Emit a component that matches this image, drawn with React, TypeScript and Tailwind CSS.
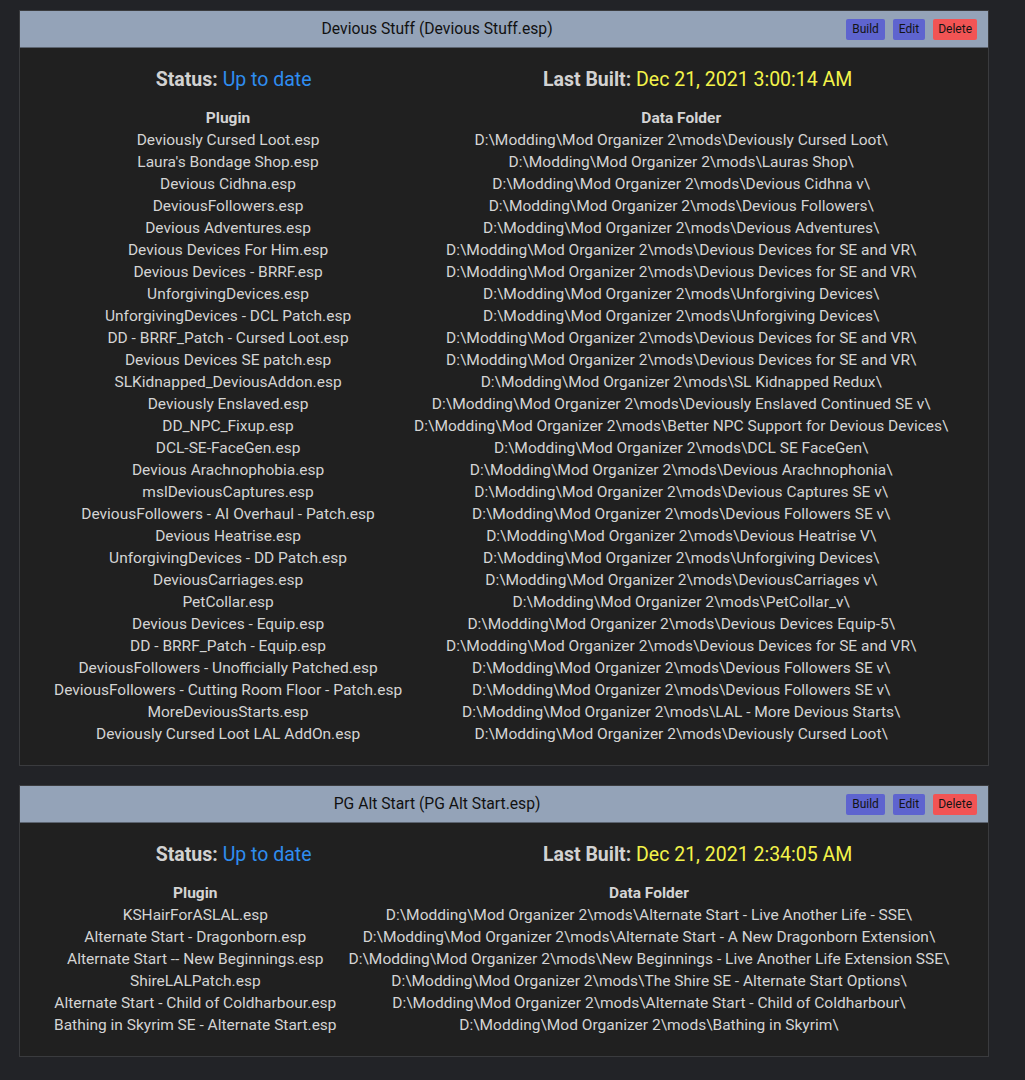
import React from 'react';

type Row = [string, string];

const MO = 'D:\\Modding\\Mod Organizer 2\\mods\\';

const devious: Row[] = [
  ['Deviously Cursed Loot.esp', 'Deviously Cursed Loot\\'],
  ["Laura's Bondage Shop.esp", 'Lauras Shop\\'],
  ['Devious Cidhna.esp', 'Devious Cidhna v\\'],
  ['DeviousFollowers.esp', 'Devious Followers\\'],
  ['Devious Adventures.esp', 'Devious Adventures\\'],
  ['Devious Devices For Him.esp', 'Devious Devices for SE and VR\\'],
  ['Devious Devices - BRRF.esp', 'Devious Devices for SE and VR\\'],
  ['UnforgivingDevices.esp', 'Unforgiving Devices\\'],
  ['UnforgivingDevices - DCL Patch.esp', 'Unforgiving Devices\\'],
  ['DD - BRRF_Patch - Cursed Loot.esp', 'Devious Devices for SE and VR\\'],
  ['Devious Devices SE patch.esp', 'Devious Devices for SE and VR\\'],
  ['SLKidnapped_DeviousAddon.esp', 'SL Kidnapped Redux\\'],
  ['Deviously Enslaved.esp', 'Deviously Enslaved Continued SE v\\'],
  ['DD_NPC_Fixup.esp', 'Better NPC Support for Devious Devices\\'],
  ['DCL-SE-FaceGen.esp', 'DCL SE FaceGen\\'],
  ['Devious Arachnophobia.esp', 'Devious Arachnophonia\\'],
  ['mslDeviousCaptures.esp', 'Devious Captures SE v\\'],
  ['DeviousFollowers - AI Overhaul - Patch.esp', 'Devious Followers SE v\\'],
  ['Devious Heatrise.esp', 'Devious Heatrise V\\'],
  ['UnforgivingDevices - DD Patch.esp', 'Unforgiving Devices\\'],
  ['DeviousCarriages.esp', 'DeviousCarriages v\\'],
  ['PetCollar.esp', 'PetCollar_v\\'],
  ['Devious Devices - Equip.esp', 'Devious Devices Equip-5\\'],
  ['DD - BRRF_Patch - Equip.esp', 'Devious Devices for SE and VR\\'],
  ['DeviousFollowers - Unofficially Patched.esp', 'Devious Followers SE v\\'],
  ['DeviousFollowers - Cutting Room Floor - Patch.esp', 'Devious Followers SE v\\'],
  ['MoreDeviousStarts.esp', 'LAL - More Devious Starts\\'],
  ['Deviously Cursed Loot LAL AddOn.esp', 'Deviously Cursed Loot\\'],
];

const altStart: Row[] = [
  ['KSHairForASLAL.esp', 'Alternate Start - Live Another Life - SSE\\'],
  ['Alternate Start - Dragonborn.esp', 'Alternate Start - A New Dragonborn Extension\\'],
  ['Alternate Start -- New Beginnings.esp', 'New Beginnings - Live Another Life Extension SSE\\'],
  ['ShireLALPatch.esp', 'The Shire SE - Alternate Start Options\\'],
  ['Alternate Start - Child of Coldharbour.esp', 'Alternate Start - Child of Coldharbour\\'],
  ['Bathing in Skyrim SE - Alternate Start.esp', 'Bathing in Skyrim\\'],
];

const PackageCard: React.FC<{ title: string; built: string; rows: Row[] }> = ({ title, built, rows }) => {
  return (
    <div className="border border-[#3a3b3e] bg-[#202020]">
      {/* Header bar */}
      <div className="flex items-center h-[37px] bg-[#94a3b8] px-2 border-b border-[#5c6470]">
        <div className="flex-1 text-center text-[15.7px] text-[#111]">{title}</div>
        <div className="flex gap-2 pr-[3px]">
          <button className="h-[21px] px-[6px] rounded-[2px] bg-[#5e64cf] text-[12px] text-[#141414]">Build</button>
          <button className="h-[21px] px-[6px] rounded-[2px] bg-[#5e64cf] text-[12px] text-[#141414]">Edit</button>
          <button className="h-[21px] px-[5px] rounded-[2px] bg-[#f25454] text-[12px] text-[#141414]">Delete</button>
        </div>
      </div>

      <div className="px-5 pt-[19px] pb-[20px]">
        <div className="flex justify-around text-[19.5px] leading-[26px]">
          <div>
            <span className="font-bold text-[#d2d2d2]">Status: </span>
            <span className="text-[#2f8df0]">Up to date</span>
          </div>
          <div>
            <span className="font-bold text-[#d2d2d2]">Last Built: </span>
            <span className="text-[#f3f34a]">{built}</span>
          </div>
        </div>

        <table className="ml-2 mt-[14px] w-[904px] text-[15.5px] leading-[22px] text-[#d4d4d4]">
          <thead>
            <tr>
              <th className="px-[6px] font-bold">Plugin</th>
              <th className="px-[6px] font-bold">Data Folder</th>
            </tr>
          </thead>
          <tbody>
            {rows.map(([plugin, folder], i) => (
              <tr key={i}>
                <td className="px-[6px] text-center whitespace-nowrap">{plugin}</td>
                <td className="px-[6px] text-center whitespace-nowrap">{MO + folder}</td>
              </tr>
            ))}
          </tbody>
        </table>
      </div>
    </div>
  );
};

export default function App() {
  return (
    <div className="min-h-screen bg-[#222327] pt-[10px] pl-[19px] pr-[36px] pb-6 font-['Roboto',sans-serif]">
      <div className="flex flex-col gap-[19px]">
        <PackageCard title="Devious Stuff (Devious Stuff.esp)" built="Dec 21, 2021 3:00:14 AM" rows={devious} />
        <PackageCard title="PG Alt Start (PG Alt Start.esp)" built="Dec 21, 2021 2:34:05 AM" rows={altStart} />
      </div>
    </div>
  );
}
